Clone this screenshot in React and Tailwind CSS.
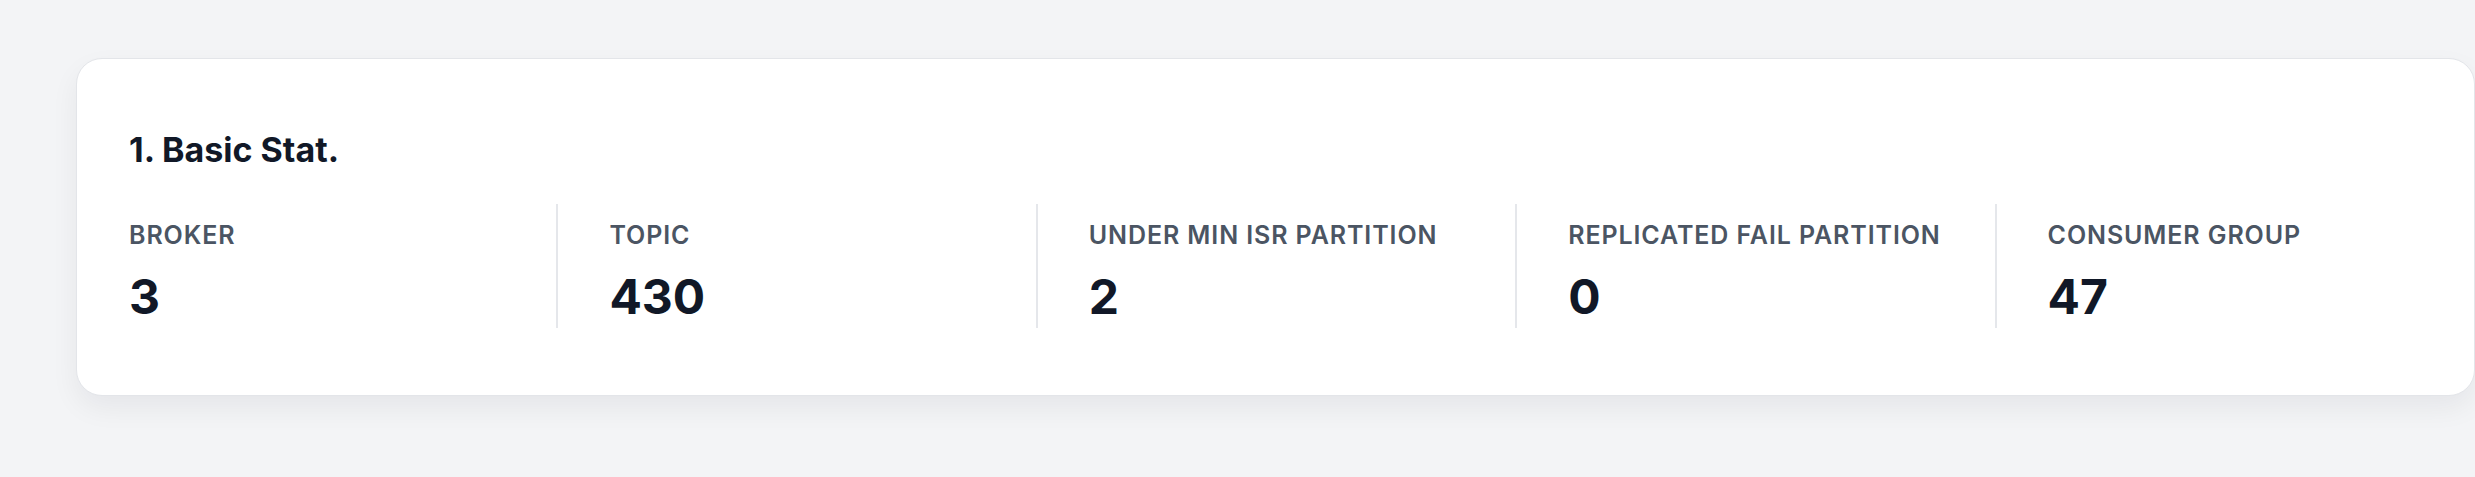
export default function App() {
  const stats = [
    ["BROKER", "3"],
    ["TOPIC", "430"],
    ["UNDER MIN ISR PARTITION", "2"],
    ["REPLICATED FAIL PARTITION", "0"],
    ["CONSUMER GROUP", "47"],
  ];
  return (
    <div
      className="w-[2475px] h-[477px] overflow-hidden bg-[#f3f4f6] pt-[58px] pl-[76px]"
      style={{ fontFamily: "Inter, 'Noto Sans', sans-serif" }}
    >
      <div className="w-[2399px] h-[338px] bg-white rounded-[26px] border border-[#e3e5e9] shadow-[0_12px_28px_rgba(17,24,39,0.06)]">
        <h2 className="pt-[71px] pl-[52px] text-[34px] font-bold leading-[40px] tracking-[0em] text-[#111827]">
          1. Basic Stat.
        </h2>
        <div className="mt-[34px] grid grid-cols-5">
          {stats.map(([label, value], i) => (
            <div
              key={label}
              className={
                i === 0
                  ? "h-[124px] pt-[16px] pl-[52px]"
                  : "h-[124px] pt-[16px] pl-[51px] border-l-2 border-[#e5e7eb]"
              }
            >
              <div className="text-[25px] leading-[30px] font-semibold tracking-[0.036em] text-[#4b5563]">
                {label}
              </div>
              <div className="mt-[19px] text-[48px] leading-[56px] font-bold text-[#111827]">
                {value}
              </div>
            </div>
          ))}
        </div>
      </div>
    </div>
  );
}
